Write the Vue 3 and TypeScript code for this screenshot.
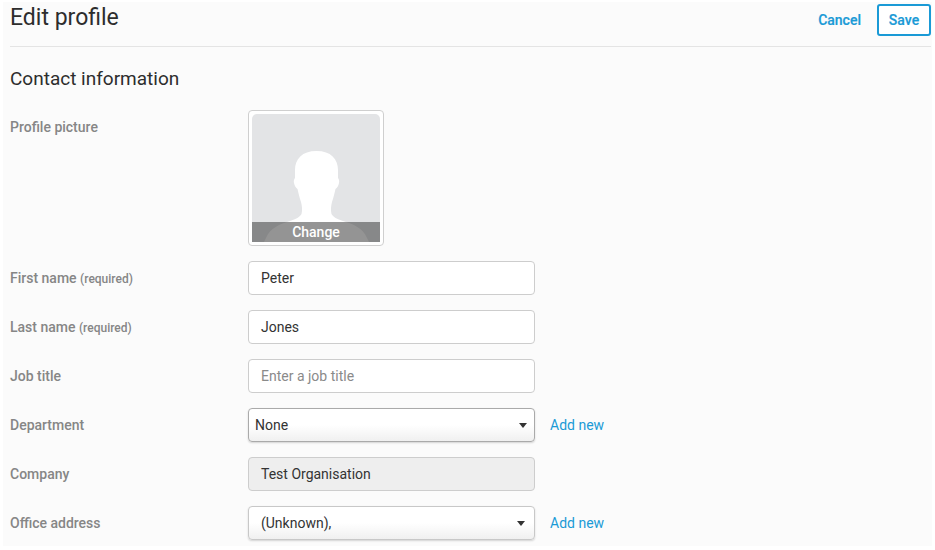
<script setup lang="ts">
interface Row {
  label: string
  required?: boolean
  kind: 'input' | 'select' | 'readonly'
  value?: string
  placeholder?: string
  addNew?: boolean
  tight?: boolean
}

const rows: Row[] = [
  { label: 'First name', required: true, kind: 'input', value: 'Peter' },
  { label: 'Last name', required: true, kind: 'input', value: 'Jones' },
  { label: 'Job title', kind: 'input', placeholder: 'Enter a job title' },
  { label: 'Department', kind: 'select', value: 'None', addNew: true, tight: true },
  { label: 'Company', kind: 'readonly', value: 'Test Organisation' },
  { label: 'Office address', kind: 'select', value: '(Unknown),', addNew: true }
]
</script>

<template>
  <div class="panel">
    <header class="head">
      <h1>Edit profile</h1>
      <div class="actions">
        <a class="cancel">Cancel</a>
        <button class="save" type="button">Save</button>
      </div>
    </header>

    <h2>Contact information</h2>

    <div class="row picture-row">
      <div class="label picture-label">Profile picture</div>
      <div class="picture">
        <div class="picture-inner">
          <svg class="avatar" viewBox="0 0 128 128" aria-hidden="true">
            <path
              fill="#fff"
              d="M64.500 37C50 37 43 45 43 56V64C42 65 41.500 67 42 69C42.500 72 44 74 45.500 75C46.500 79 47.500 84 49 88C50 92 50.500 96 49.500 100C48 103 44 105 38 107C28 110 18 114 14 124L12 128H117L115 124C111 114 101 110 91 107C85 105 81 103 79.500 100C78.500 96 79 92 80 88C81.500 84 82.500 79 83.500 75C85 74 86.500 72 87 69C87.500 67 87 65 86 64V56C86 45 79 37 64.500 37Z"
            />
          </svg>
          <div class="change">Change</div>
        </div>
      </div>
    </div>

    <div v-for="row in rows" :key="row.label" class="row">
      <div class="label">
        {{ row.label }}
        <span v-if="row.required" class="req">(required)</span>
      </div>
      <div v-if="row.kind === 'input'" class="field" :class="{ placeholder: !row.value }">
        {{ row.value || row.placeholder }}
      </div>
      <div v-else-if="row.kind === 'readonly'" class="field readonly">{{ row.value }}</div>
      <div v-else class="field select" :class="{ tight: row.tight }">
        <span>{{ row.value }}</span>
        <i class="caret"></i>
      </div>
      <a v-if="row.addNew" class="add">Add new</a>
    </div>
  </div>
</template>

<style>
html,
body {
  background: #fff;
}
</style>

<style scoped>
.panel {
  box-sizing: border-box;
  width: 929px;
  height: 544px;
  margin: 2px 0 0 3px;
  padding: 0 1px 0 7px;
  background: #fbfbfb;
  overflow: hidden;
  font-family: Roboto, "Liberation Sans", sans-serif;
}

.head {
  display: flex;
  justify-content: space-between;
  align-items: flex-start;
  height: 44px;
  border-bottom: 1px solid #e4e4e4;
}

h1 {
  margin: 0;
  font-size: 23px;
  line-height: 32px;
  font-weight: 400;
  color: #2d2d2d;
}

.actions {
  display: flex;
  align-items: center;
  gap: 16px;
  margin-top: 2px;
}

.cancel {
  font-size: 14px;
  font-weight: 500;
  color: #1a9ad6;
  -webkit-text-stroke: 0.2px #1a9ad6;
}

.save {
  box-sizing: border-box;
  width: 54px;
  height: 32px;
  padding: 0;
  border: 2px solid #1a9ad6;
  border-radius: 3px;
  background: #fff;
  font-family: inherit;
  font-size: 14px;
  font-weight: 500;
  color: #1a9ad6;
  -webkit-text-stroke: 0.2px #1a9ad6;
}

h2 {
  margin: 19px 0 18px;
  font-size: 19px;
  line-height: 26px;
  font-weight: 400;
  color: #2d2d2d;
}

.row {
  display: flex;
  align-items: center;
  margin-bottom: 15px;
}

.picture-row {
  align-items: flex-start;
}

.label {
  width: 238px;
  flex: none;
  font-size: 14px;
  font-weight: 500;
  color: #868686;
}

.picture-label {
  margin-top: 9px;
}

.req {
  font-size: 12px;
}

.picture {
  box-sizing: border-box;
  width: 136px;
  height: 136px;
  padding: 3px;
  border: 1px solid #cfcfcf;
  border-radius: 4px;
  background: #fff;
}

.picture-inner {
  position: relative;
  height: 100%;
  border-radius: 5px 5px 0 0;
  background: #e3e4e6;
  overflow: hidden;
}

.avatar {
  display: block;
  width: 100%;
  height: 100%;
}

.change {
  position: absolute;
  left: 0;
  right: 0;
  bottom: 0;
  height: 20px;
  line-height: 20px;
  text-align: center;
  font-size: 14px;
  font-weight: 500;
  color: #fff;
  background: rgba(60, 60, 60, 0.55);
}

.field {
  box-sizing: border-box;
  display: flex;
  align-items: center;
  width: 287px;
  height: 34px;
  padding: 0 12px;
  border: 1px solid #cdcdcd;
  border-radius: 4px;
  background: #fff;
  font-size: 14px;
  color: #333;
}

.placeholder {
  color: #8a8a8a;
}

.readonly {
  background: #eeeeee;
}

.select {
  justify-content: space-between;
  border-color: #c8c8c8;
  background: linear-gradient(#fff 50%, #f0f0f0);
  box-shadow: 0 1px 2px rgba(0, 0, 0, 0.16);
}

.select.tight {
  padding: 0 7px 0 6px;
  border-color: #aaa;
}

.select:not(.tight) {
  padding-right: 9px;
}

.caret {
  width: 0;
  height: 0;
  border-left: 4.500px solid transparent;
  border-right: 4.500px solid transparent;
  border-top: 5px solid #333;
}

.add {
  margin-left: 15px;
  font-size: 14px;
  color: #1a9ad6;
}
</style>
